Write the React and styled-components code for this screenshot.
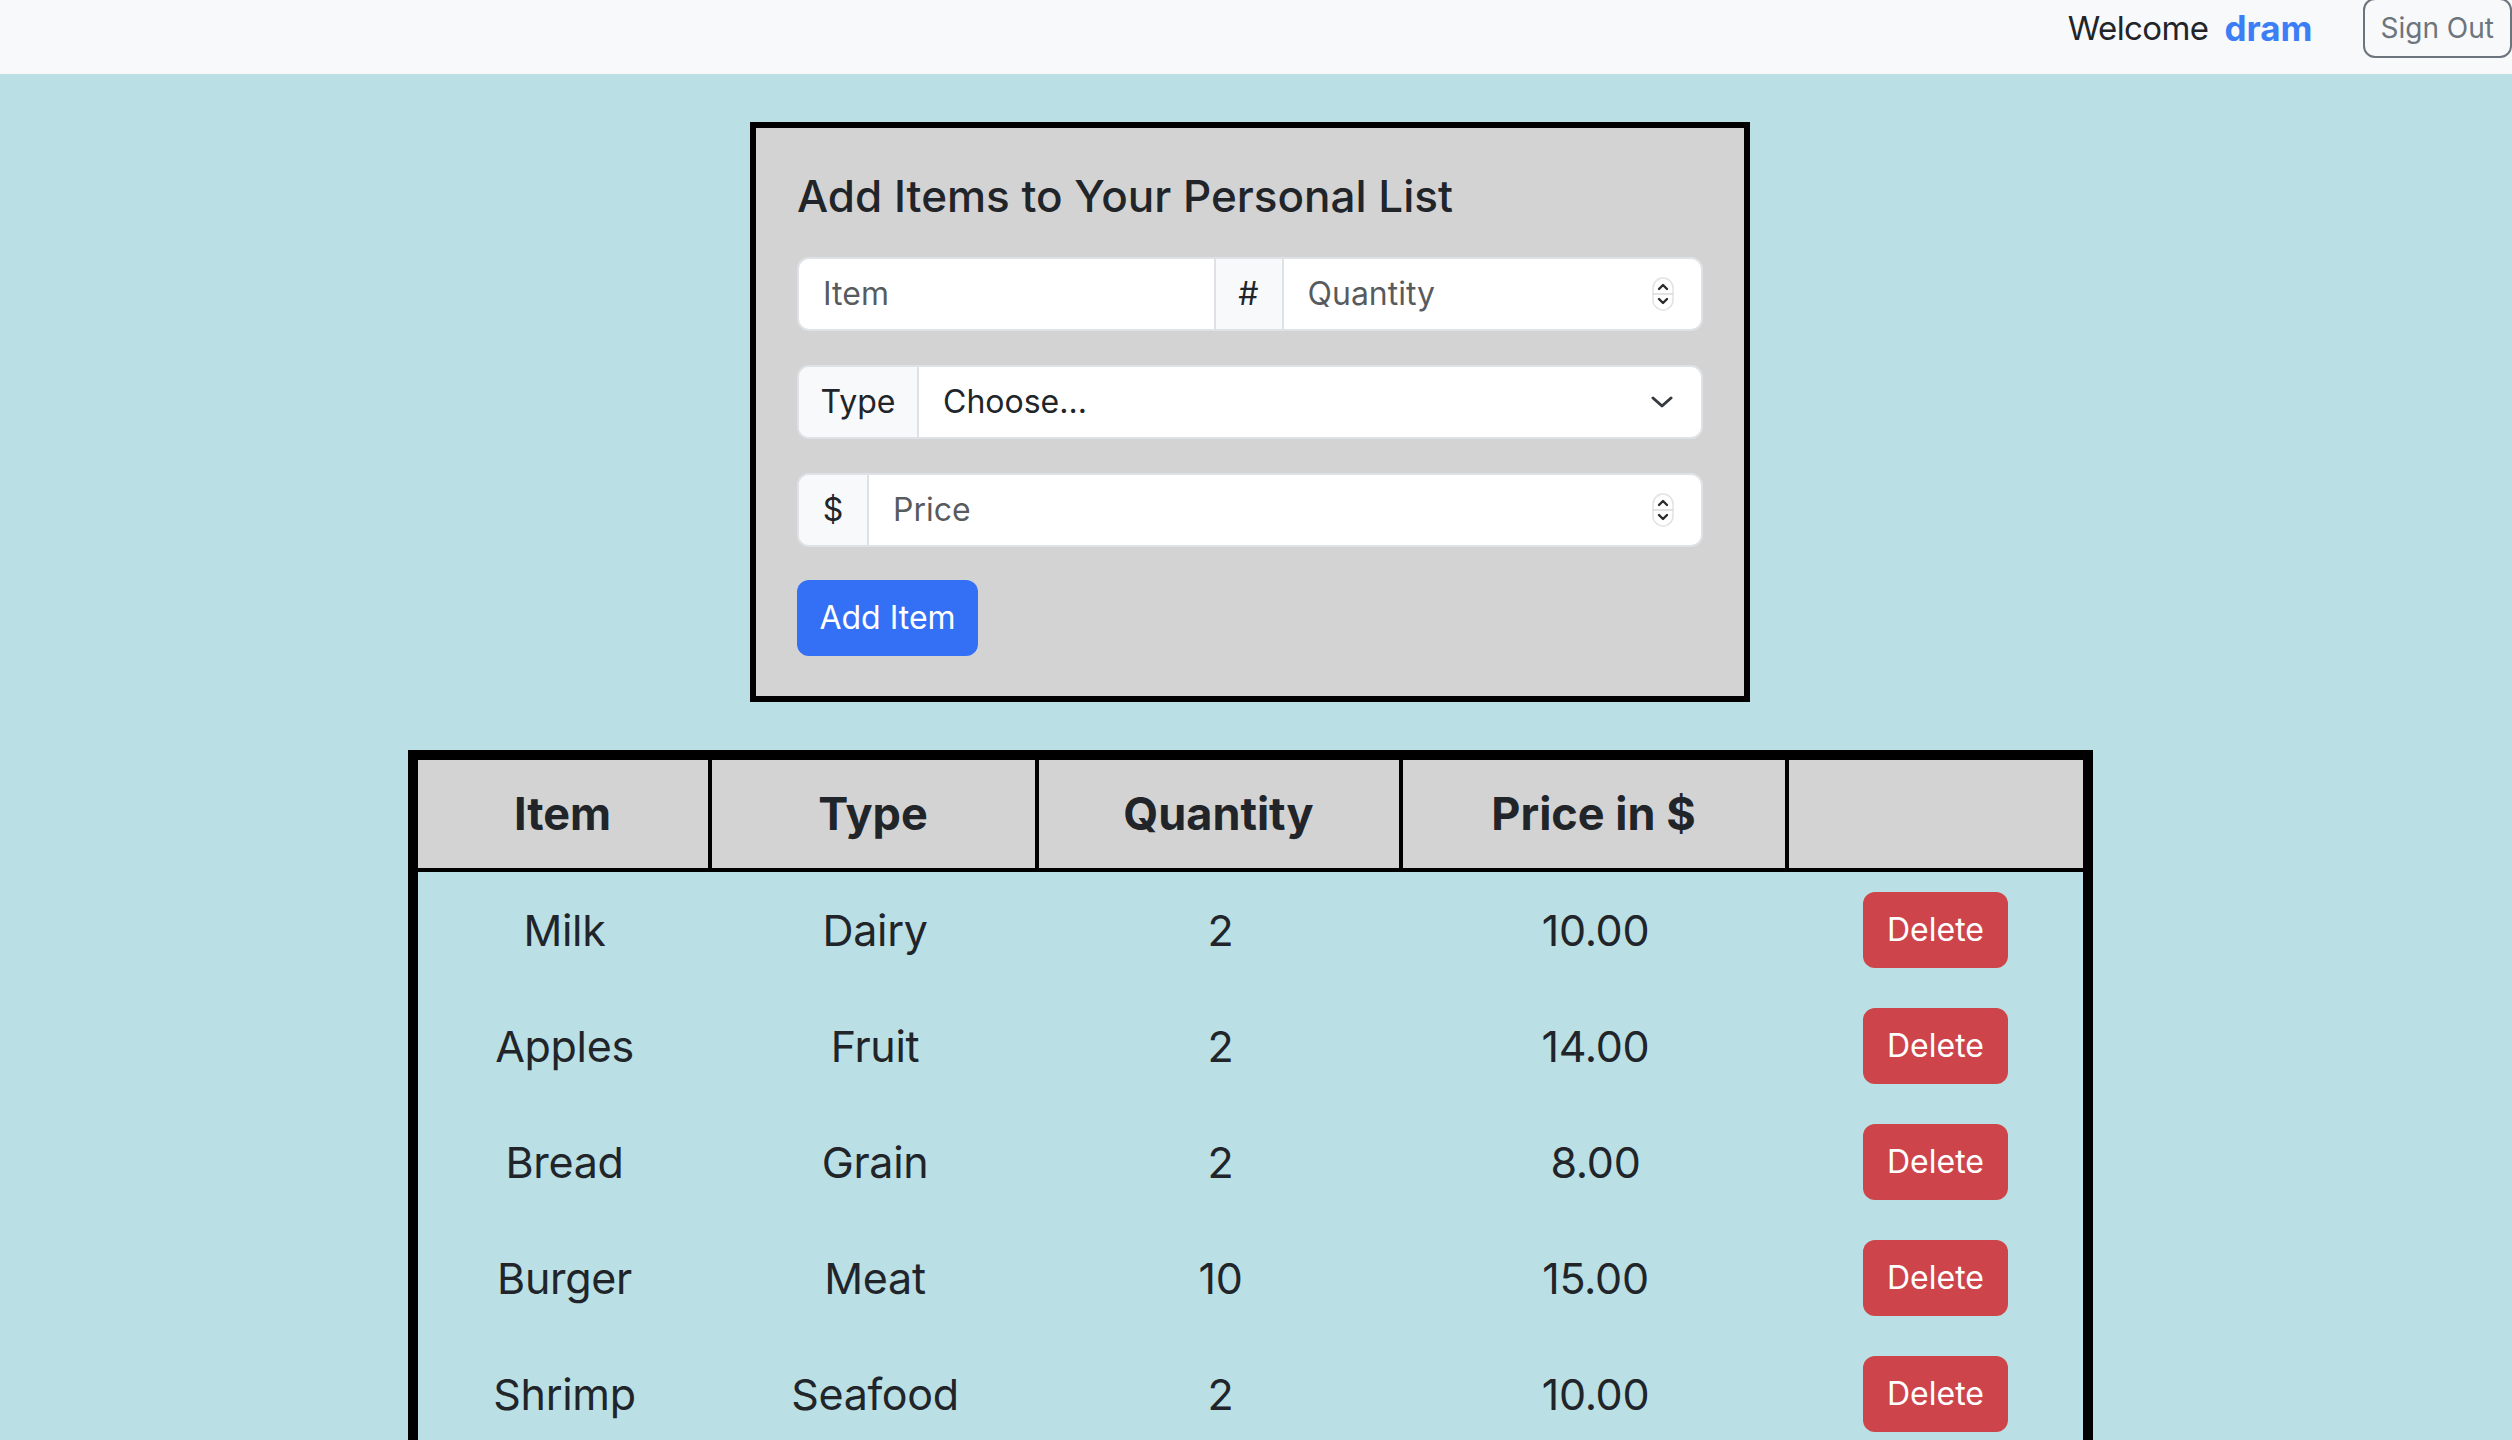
import React from 'react';
import styled, { createGlobalStyle } from 'styled-components';

const GlobalStyle = createGlobalStyle`
  body {
    margin: 0;
    background: #badfe5;
    font-family: Inter, "Noto Sans", sans-serif;
    color: #212529;
  }
  * {
    box-sizing: border-box;
  }
`;

const NavBar = styled.nav`
  height: 74px;
  background: #f8f9fa;
  display: flex;
  justify-content: flex-end;
  align-items: center;
  padding-bottom: 19px;
  overflow: visible;
`;

const Welcome = styled.span`
  font-size: 33px;
  letter-spacing: -0.6px;
  color: #212529;
`;

const UserName = styled.span`
  font-size: 35px;
  font-weight: 700;
  color: #3b7ef5;
  margin-left: 16px;
  margin-right: 50px;
`;

const OutlineButton = styled.button`
  height: 60px;
  padding: 0 16px;
  border: 2px solid #6c757d;
  border-radius: 12px;
  background: transparent;
  color: #6c757d;
  font-family: inherit;
  font-size: 28px;
`;

const Main = styled.main`
  padding: 48px 12px 0 0;
  display: flex;
  flex-direction: column;
  align-items: center;
  gap: 48px;
`;

const FormCard = styled.form`
  width: 1000px;
  border: 6px solid #000;
  background: #d3d3d3;
  padding: 43px 41px 40px;
  display: flex;
  flex-direction: column;
`;

const Heading = styled.h3`
  margin: 0 0 34px;
  font-size: 44px;
  font-weight: 500;
  line-height: 1.18;
`;

const InputGroup = styled.div`
  display: flex;
  height: 74px;
  margin-bottom: ${({ last }) => (last ? '33px' : '34px')};
  border: 2px solid #dee2e6;
  border-radius: 12px;
  overflow: hidden;
  background: #fff;
`;

const Addon = styled.span`
  display: flex;
  align-items: center;
  justify-content: center;
  width: ${({ w }) => w}px;
  flex: none;
  background: #f8f9fa;
  border-left: ${({ mid }) => (mid ? '2px solid #dee2e6' : 'none')};
  border-right: 2px solid #dee2e6;
  font-size: 32px;
  color: #212529;
`;

const Field = styled.div`
  flex: 1;
  display: flex;
  align-items: center;
  padding: 0 ${({ pr }) => pr || 24}px 0 24px;
  min-width: 0;
`;

const TextInput = styled.input`
  flex: 1;
  min-width: 0;
  border: none;
  outline: none;
  background: transparent;
  font-family: inherit;
  font-size: 32px;
  color: #212529;
  padding: 0;
  &::placeholder {
    color: rgba(33, 37, 41, 0.75);
  }
`;

const SelectInput = styled.select`
  flex: 1;
  min-width: 0;
  border: none;
  outline: none;
  background: transparent;
  appearance: none;
  font-family: inherit;
  font-size: 32px;
  color: #212529;
  padding: 0;
`;

const PrimaryButton = styled.button`
  align-self: flex-start;
  width: 181px;
  height: 76px;
  border: none;
  border-radius: 12px;
  background: #3370f5;
  color: #fff;
  font-family: inherit;
  font-size: 32px;
`;

const Table = styled.table`
  width: 1685px;
  border: 10px solid #000;
  border-spacing: 0;
  table-layout: fixed;
  margin-bottom: 40px;
`;

const HeadCell = styled.th`
  height: 112px;
  background: #d3d3d3;
  border-bottom: 4px solid #000;
  border-right: ${({ last }) => (last ? 'none' : '4px solid #000')};
  font-size: 45px;
  font-weight: 700;
  text-align: center;
  padding: 0;
`;

const Cell = styled.td`
  height: 116px;
  padding: 0;
  text-align: center;
  vertical-align: middle;
  font-size: 43px;
  letter-spacing: -0.3px;
  color: #212529;
`;

const DangerButton = styled.button`
  width: 145px;
  height: 76px;
  border: none;
  border-radius: 12px;
  background: #cd444b;
  color: #fff;
  font-family: inherit;
  font-size: 32px;
`;

const Spinner = () => (
  <svg width="22" height="34" viewBox="0 0 22 34">
    <rect x="1" y="1" width="20" height="32" rx="10" fill="#fff" stroke="#e2e2e2" strokeWidth="1.5" />
    <line x1="1" y1="17" x2="21" y2="17" stroke="#d8d8d8" strokeWidth="1.5" />
    <polyline points="7,12 11,8 15,12" fill="none" stroke="#2b2b2b" strokeWidth="2.4" strokeLinecap="round" strokeLinejoin="round" />
    <polyline points="7,22 11,26 15,22" fill="none" stroke="#2b2b2b" strokeWidth="2.4" strokeLinecap="round" strokeLinejoin="round" />
  </svg>
);

const Chevron = () => (
  <svg width="22" height="12" viewBox="0 0 22 12">
    <polyline points="2,2 11,10 20,2" fill="none" stroke="#343a40" strokeWidth="3" strokeLinecap="round" strokeLinejoin="round" />
  </svg>
);

const items = [
  { name: 'Milk', type: 'Dairy', qty: 2, price: '10.00' },
  { name: 'Apples', type: 'Fruit', qty: 2, price: '14.00' },
  { name: 'Bread', type: 'Grain', qty: 2, price: '8.00' },
  { name: 'Burger', type: 'Meat', qty: 10, price: '15.00' },
  { name: 'Shrimp', type: 'Seafood', qty: 2, price: '10.00' },
];

const colWidths = [294, 327, 364, 386, 294];

export default function App() {
  return (
    <>
      <GlobalStyle />
      <NavBar>
        <Welcome>Welcome</Welcome>
        <UserName>dram</UserName>
        <OutlineButton type="button">Sign Out</OutlineButton>
      </NavBar>
      <Main>
        <FormCard onSubmit={(e) => e.preventDefault()}>
          <Heading>Add Items to Your Personal List</Heading>
          <InputGroup>
            <Field>
              <TextInput placeholder="Item" />
            </Field>
            <Addon w={70} mid>#</Addon>
            <Field pr={27}>
              <TextInput placeholder="Quantity" />
              <Spinner />
            </Field>
          </InputGroup>
          <InputGroup>
            <Addon w={120}>Type</Addon>
            <Field pr={28}>
              <SelectInput defaultValue="">
                <option value="">Choose...</option>
                <option>Dairy</option>
                <option>Fruit</option>
                <option>Grain</option>
                <option>Meat</option>
                <option>Seafood</option>
              </SelectInput>
              <Chevron />
            </Field>
          </InputGroup>
          <InputGroup last>
            <Addon w={70}>$</Addon>
            <Field pr={27}>
              <TextInput placeholder="Price" />
              <Spinner />
            </Field>
          </InputGroup>
          <PrimaryButton type="submit">Add Item</PrimaryButton>
        </FormCard>
        <Table>
          <colgroup>
            {colWidths.map((w, i) => (
              <col key={i} style={{ width: w }} />
            ))}
          </colgroup>
          <thead>
            <tr>
              <HeadCell>Item</HeadCell>
              <HeadCell>Type</HeadCell>
              <HeadCell>Quantity</HeadCell>
              <HeadCell>Price in $</HeadCell>
              <HeadCell last />
            </tr>
          </thead>
          <tbody>
            {items.map((it) => (
              <tr key={it.name}>
                <Cell>{it.name}</Cell>
                <Cell>{it.type}</Cell>
                <Cell>{it.qty}</Cell>
                <Cell>{it.price}</Cell>
                <Cell>
                  <DangerButton type="button">Delete</DangerButton>
                </Cell>
              </tr>
            ))}
          </tbody>
        </Table>
      </Main>
    </>
  );
}
